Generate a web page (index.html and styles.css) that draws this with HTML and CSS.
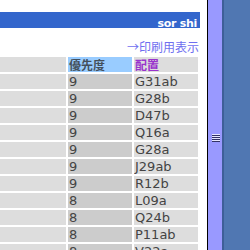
FILE: index.html
```html
<!DOCTYPE html>
<html>
<head>
<meta charset="utf-8">
<link rel="stylesheet" href="styles.css">
</head>
<body>
<div class="layout">
  <div class="page">
    <div class="titlebar"><span class="user">sor shi</span></div>
    <div class="printlink"><a href="#">→印刷用表示</a></div>
    <table class="list">
      <tr><th class="c1"></th><th class="c2">優先度</th><th class="c3">配置</th></tr>
      <tr><td class="c1"></td><td class="c2">9</td><td class="c3">G31ab</td></tr>
      <tr><td class="c1"></td><td class="c2">9</td><td class="c3">G28b</td></tr>
      <tr><td class="c1"></td><td class="c2">9</td><td class="c3">D47b</td></tr>
      <tr><td class="c1"></td><td class="c2">9</td><td class="c3">Q16a</td></tr>
      <tr><td class="c1"></td><td class="c2">9</td><td class="c3">G28a</td></tr>
      <tr><td class="c1"></td><td class="c2">9</td><td class="c3">J29ab</td></tr>
      <tr><td class="c1"></td><td class="c2">9</td><td class="c3">R12b</td></tr>
      <tr><td class="c1"></td><td class="c2">8</td><td class="c3">L09a</td></tr>
      <tr><td class="c1"></td><td class="c2">8</td><td class="c3">Q24b</td></tr>
      <tr><td class="c1"></td><td class="c2">8</td><td class="c3">P11ab</td></tr>
      <tr><td class="c1"></td><td class="c2">8</td><td class="c3">V22a</td></tr>
    </table>
  </div>
  <div class="sep"></div>
  <div class="thumb"><div class="grip"></div></div>
  <div class="edge"></div>
  <div class="desk"></div>
</div>
</body>
</html>
```
FILE: styles.css
```css
html, body {
  margin: 0;
  padding: 0;
  height: 100%;
  overflow: hidden;
  background: #ffffff;
  font-family: "DejaVu Sans", "Noto Sans CJK JP", sans-serif;
}
.layout {
  display: flex;
  height: 250px;
}
.page {
  width: 207px;
  flex: none;
  overflow: hidden;
  padding-top: 12px;
  box-sizing: border-box;
}
.titlebar {
  width: 200px;
  height: 16px;
  background: #3366cc;
  text-align: right;
  box-sizing: border-box;
  padding-right: 3px;
}
.user {
  color: #ffffff;
  font-weight: bold;
  font-size: 11px;
  line-height: 16px;
  letter-spacing: -0.3px;
}
.printlink {
  width: 200px;
  text-align: right;
  padding-top: 11px;
  height: 16px;
  line-height: 16px;
  font-size: 12px;
  font-family: "Noto Sans CJK JP", "DejaVu Sans", sans-serif;
}
.printlink a {
  color: #6f6ff0;
  text-decoration: none;
  padding-right: 1px;
}
.list {
  border-spacing: 2px;
  margin-left: -4px;
  margin-top: 0;
  width: 204px;
  table-layout: fixed;
}
.list th, .list td {
  height: 15px;
  padding: 0 1px;
  font-size: 13px;
  line-height: 15px;
  text-align: left;
  color: #444444;
  white-space: nowrap;
  overflow: hidden;
}
.list th {
  font-size: 12px;
  font-weight: bold;
  font-family: "Noto Sans CJK JP", sans-serif;
}
.c1 { width: 66px; background: #dddddd; }
.c2 { width: 62px; background: #cccccc; }
.c3 { width: 62px; background: #dddddd; }
th.c2 { background: #99ccff; color: #44505c; }
th.c3 { color: #9933cc; }
.sep {
  width: 1px;
  flex: none;
  background: #000000;
}
.thumb {
  width: 14px;
  flex: none;
  background: #9999ff;
  padding-top: 134px;
  box-sizing: border-box;
}
.grip {
  width: 8px;
  height: 8px;
  margin-left: 4px;
  background: repeating-linear-gradient(to bottom, #e6e6ff 0, #e6e6ff 1px, #333366 1px, #333366 2px);
}
.edge {
  width: 2px;
  flex: none;
  background: #3e5f99;
}
.desk {
  flex: 1;
  background: #5077b2;
}
```
